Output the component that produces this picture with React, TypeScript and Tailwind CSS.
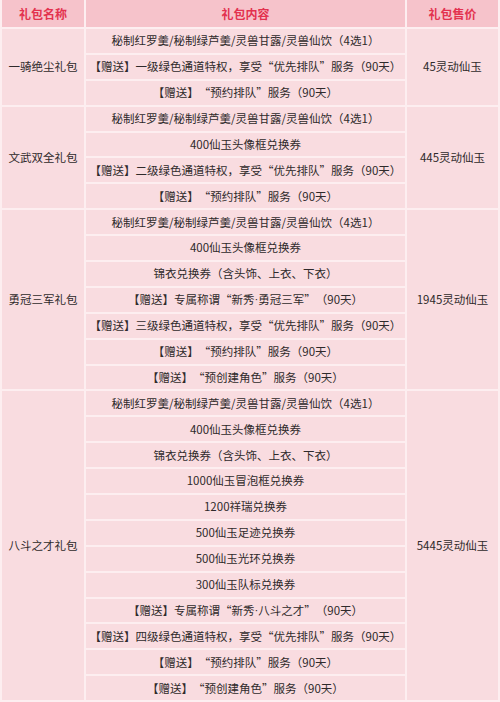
import React from "react";

const groups = [
  {
    name: "一骑绝尘礼包",
    price: "45灵动仙玉",
    items: [
      "秘制红罗羹/秘制绿芦羹/灵兽甘露/灵兽仙饮（4选1）",
      "【赠送】一级绿色通道特权，享受“优先排队”服务（90天）",
      "【赠送】“预约排队”服务（90天）",
    ],
  },
  {
    name: "文武双全礼包",
    price: "445灵动仙玉",
    items: [
      "秘制红罗羹/秘制绿芦羹/灵兽甘露/灵兽仙饮（4选1）",
      "400仙玉头像框兑换券",
      "【赠送】二级绿色通道特权，享受“优先排队”服务（90天）",
      "【赠送】“预约排队”服务（90天）",
    ],
  },
  {
    name: "勇冠三军礼包",
    price: "1945灵动仙玉",
    items: [
      "秘制红罗羹/秘制绿芦羹/灵兽甘露/灵兽仙饮（4选1）",
      "400仙玉头像框兑换券",
      "锦衣兑换券（含头饰、上衣、下衣）",
      "【赠送】专属称谓“新秀·勇冠三军”（90天）",
      "【赠送】三级绿色通道特权，享受“优先排队”服务（90天）",
      "【赠送】“预约排队”服务（90天）",
      "【赠送】“预创建角色”服务（90天）",
    ],
  },
  {
    name: "八斗之才礼包",
    price: "5445灵动仙玉",
    items: [
      "秘制红罗羹/秘制绿芦羹/灵兽甘露/灵兽仙饮（4选1）",
      "400仙玉头像框兑换券",
      "锦衣兑换券（含头饰、上衣、下衣）",
      "1000仙玉冒泡框兑换券",
      "1200祥瑞兑换券",
      "500仙玉足迹兑换券",
      "500仙玉光环兑换券",
      "300仙玉队标兑换券",
      "【赠送】专属称谓“新秀·八斗之才”（90天）",
      "【赠送】四级绿色通道特权，享受“优先排队”服务（90天）",
      "【赠送】“预约排队”服务（90天）",
      "【赠送】“预创建角色”服务（90天）",
    ],
  },
];

const spanClass: Record<number, string> = {
  3: "row-span-3",
  4: "row-span-4",
  7: "row-span-7",
  12: "row-span-12",
};

function ItemText({ text }: { text: string }) {
  const parts = text.split(/([“”·])/);
  return (
    <>
      {parts.map((p, i) => {
        if (p === "·")
          return (
            <span key={i} style={{ fontFamily: '"Liberation Sans", sans-serif' }}>
              ·
            </span>
          );
        if (p === "“" || p === "”")
          return (
            <span key={i} className="[font-variant-east-asian:full-width]">
              {p}
            </span>
          );
        return <React.Fragment key={i}>{p}</React.Fragment>;
      })}
    </>
  );
}

export default function App() {
  return (
    <div
      className="w-[500px] h-[702px] bg-[#fdeef0] px-[2px] pb-[2px] overflow-hidden"
      style={{ fontFamily: '"Noto Sans CJK SC", "Noto Sans", sans-serif' }}
    >
      <div className="grid grid-cols-[82px_319px_1fr] grid-rows-[27px_repeat(26,23.9px)] gap-[2px] text-[11.5px] text-[#2f2a2b]">
        <div className="bg-[#f6c3cb] flex items-center justify-center font-bold text-[#e3324f] text-[12px]">礼包名称</div>
        <div className="bg-[#f6c3cb] flex items-center justify-center font-bold text-[#e3324f] text-[12px]">礼包内容</div>
        <div className="bg-[#f6c3cb] flex items-center justify-center font-bold text-[#e3324f] text-[12px]">礼包售价</div>
        {groups.map((g) => (
          <React.Fragment key={g.name}>
            <div className={`col-start-1 ${spanClass[g.items.length]} bg-[#f9dce0] flex items-center justify-center`}>
              {g.name}
            </div>
            <div className="col-start-2 bg-[#f9dce0] flex items-center justify-center whitespace-nowrap">
              <ItemText text={g.items[0]} />
            </div>
            <div className={`col-start-3 ${spanClass[g.items.length]} bg-[#f9dce0] flex items-center justify-center`}>
              {g.price}
            </div>
            {g.items.slice(1).map((it, i) => (
              <div
                key={i}
                className="col-start-2 bg-[#f9dce0] flex items-center justify-center whitespace-nowrap"
              >
                <ItemText text={it} />
              </div>
            ))}
          </React.Fragment>
        ))}
      </div>
    </div>
  );
}
